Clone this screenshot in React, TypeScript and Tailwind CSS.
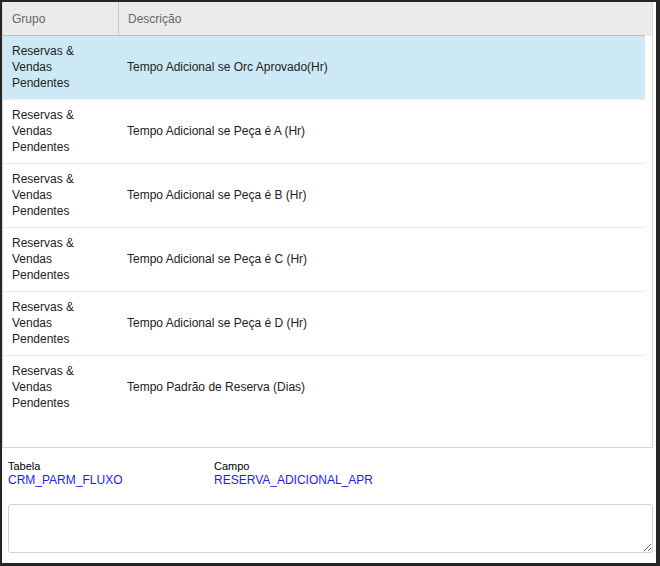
const rows = [
  { desc: "Tempo Adicional se Orc Aprovado(Hr)", selected: true },
  { desc: "Tempo Adicional se Peça é A (Hr)" },
  { desc: "Tempo Adicional se Peça é B (Hr)" },
  { desc: "Tempo Adicional se Peça é C (Hr)" },
  { desc: "Tempo Adicional se Peça é D (Hr)" },
  { desc: "Tempo Padrão de Reserva (Dias)" },
];

const App = () => {
  return (
    <div
      className="w-[660px] h-[566px] bg-[#252525] pt-[2px] pl-[2px] pr-[4px] pb-[3px]"
      style={{ fontFamily: '"Liberation Sans", Arial, sans-serif' }}
    >
      <div className="bg-white h-full flex flex-col">
        {/* grid */}
        <div className="h-[446px] mr-[3px] border border-t-0 border-[#d6d6d6] flex flex-col">
          <div className="h-[34px] bg-[#ebebeb] pr-[7px]">
            <div className="h-full flex border-b border-[#bdbdbd] text-[12px] text-[#666]">
              <div className="w-[116px] pl-[9px] flex items-center border-r border-[#c8c8c8]">
                Grupo
              </div>
              <div className="pl-[9px] flex items-center">Descrição</div>
            </div>
          </div>
          <div className="pr-[7px]">
            {rows.map((r, i) => (
              <div
                key={i}
                className={
                  i < rows.length - 1
                    ? "h-[64px] border-b border-[#ececec] text-[12px] text-[#222]"
                    : "h-[64px] text-[12px] text-[#222]"
                }
              >
                <div
                  className={
                    r.selected
                      ? "h-[63px] pb-[2px] flex items-center bg-[#cde9f5]"
                      : "h-[63px] pb-[2px] flex items-center"
                  }
                >
                  <div className="w-[116px] pl-[9px] leading-[16px]">
                    Reservas &amp;
                    <br />
                    Vendas
                    <br />
                    Pendentes
                  </div>
                  <div className="pl-[8px]">{r.desc}</div>
                </div>
              </div>
            ))}
          </div>
        </div>

        {/* info */}
        <div className="flex pl-[6px] pt-[12px]">
          <div className="w-[206px]">
            <div className="text-[11px] leading-[13px] text-black">Tabela</div>
            <div className="text-[12px] leading-[14px] text-[#1c1cff]">CRM_PARM_FLUXO</div>
          </div>
          <div>
            <div className="text-[11px] leading-[13px] text-black">Campo</div>
            <div className="text-[12px] leading-[14px] text-[#1c1cff]">RESERVA_ADICIONAL_APR</div>
          </div>
        </div>

        <div className="pl-[6px] pr-[3px] pt-[17px]">
          <textarea className="block w-full h-[49px] border border-[#d2d2d2] rounded-[3px] outline-none resize-y" />
        </div>
      </div>
    </div>
  );
};

export default App;
